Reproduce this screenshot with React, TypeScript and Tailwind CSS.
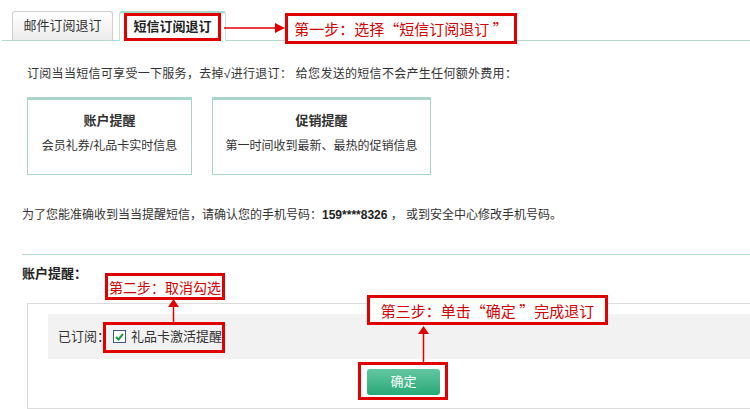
const RED = "#e00000";

function Note({
  className,
  children,
}: {
  className: string;
  children: React.ReactNode;
}) {
  return (
    <div
      className={`absolute border-[3px] border-[#e00000] bg-white flex items-center justify-center leading-none text-[#d40000] whitespace-nowrap ${className}`}
      style={{ fontFamily: '"Noto Sans CJK SC", sans-serif' }}
    >
      {children}
    </div>
  );
}

function Box({ className }: { className: string }) {
  return <div className={`absolute border-[3px] border-[#e00000] ${className}`} />;
}

export default function App() {
  return (
    <div
      className="relative w-[750px] h-[409px] overflow-hidden bg-white text-[12px] text-[#333]"
      style={{ fontFamily: '"Liberation Sans", "Noto Sans CJK SC", sans-serif' }}
    >
      {/* tabs */}
      <div className="pt-[11px] pl-[2px]">
        <div className="flex items-end gap-[6px] pl-[10px] border-b border-[#b1d9cf] h-[30px]">
          <div className="w-[101px] h-[29px] flex items-center justify-center border border-b-0 border-[#cfcfcf] rounded-t-[3px] bg-gradient-to-b from-white to-[#ececec] text-[13px] text-[#333]">
            邮件订阅退订
          </div>
          <div className="w-[107px] h-[30px] -mb-px flex items-center justify-center border-x border-[#c6e4dc] border-t-2 border-t-[#a9d6cb] rounded-t-[3px] bg-white text-[13px] font-bold text-[#222]">
            短信订阅退订
          </div>
        </div>
      </div>

      <div className="pl-[27px] pt-[26px]">
        <p className="leading-[14px] tracking-[0.3px]">
          订阅当当短信可享受一下服务，去掉√进行退订： 给您发送的短信不会产生任何额外费用：
        </p>
        <div className="flex gap-[20px] mt-[16px]">
          <div className="w-[165px] h-[78px] border border-[#a9d6cb] border-t-[3px] flex flex-col items-center pt-[11px]">
            <span className="font-bold text-[13px] text-[#333]">账户提醒</span>
            <span className="mt-[6px] text-[#333]">会员礼券/礼品卡实时信息</span>
          </div>
          <div className="w-[219px] h-[78px] border border-[#a9d6cb] border-t-[3px] flex flex-col items-center pt-[11px]">
            <span className="font-bold text-[13px] text-[#333]">促销提醒</span>
            <span className="mt-[6px] text-[#333]">第一时间收到最新、最热的促销信息</span>
          </div>
        </div>
      </div>

      <div className="pl-[22px]">
        <p className="mt-[33px] leading-[14px]">
          为了您能准确收到当当提醒短信，请确认您的手机号码：<b className="text-[#222]">159****8326</b> ， 或到安全中心修改手机号码。
        </p>
        <div className="mt-[32px] border-t border-[#b1d9cf]" />
        <p className="mt-[12px] font-bold text-[13px] leading-[14px] text-[#222]">账户提醒：</p>
      </div>

      <div className="ml-[27px] mt-[22px] border border-[#dcdcdc] border-r-0 h-[106px] pt-[10px]">
        <div className="ml-[20px] h-[45px] bg-[#f2f2f2] flex items-center pl-[10px]">
          <span className="text-[13px] text-[#333]">已订阅：</span>
          <span className="ml-[3px] w-[13px] h-[13px] border border-[#3d5a80] bg-white flex items-center justify-center">
            <svg width="9" height="8" viewBox="0 0 9 8">
              <path d="M1 4 L3.5 6.5 L8 1" stroke="#1e9b3c" strokeWidth="2" fill="none" />
            </svg>
          </span>
          <span className="ml-[5px] text-[13px] text-[#333]">礼品卡激活提醒</span>
        </div>
        <div className="ml-[339px] mt-[10px] w-[73px] h-[26px] rounded-[3px] bg-gradient-to-b from-[#62c7a2] to-[#25a877] flex items-center justify-center text-white text-[13px]">
          确定
        </div>
      </div>

      {/* annotations */}
      <Box className="left-[124px] top-[13px] w-[97px] h-[28px]" />
      <Note className="left-[285px] top-[13px] w-[232px] h-[31px] text-[15px]">第一步：选择“短信订阅退订 ”</Note>
      <Note className="left-[105px] top-[273px] w-[120px] h-[27px] text-[14px]">第二步：取消勾选</Note>
      <Box className="left-[103px] top-[322px] w-[122px] h-[31px]" />
      <Note className="left-[367px] top-[295px] w-[241px] h-[30px] text-[15px]">第三步：单击“确定 ”完成退订</Note>
      <Box className="left-[358px] top-[362px] w-[90px] h-[38px]" />

      <svg className="absolute left-0 top-0" width="750" height="409">
        <line x1="224" y1="28" x2="276" y2="28" stroke={RED} strokeWidth="1.5" />
        <polygon points="275,23 285,28 275,33" fill={RED} />
        <line x1="173.5" y1="306" x2="173.5" y2="322" stroke={RED} strokeWidth="1.5" />
        <polygon points="168,307 173.5,299 179,307" fill={RED} />
        <line x1="423.5" y1="332" x2="423.5" y2="362" stroke={RED} strokeWidth="1.5" />
        <polygon points="418,334 423.5,326 429,334" fill={RED} />
      </svg>
    </div>
  );
}
